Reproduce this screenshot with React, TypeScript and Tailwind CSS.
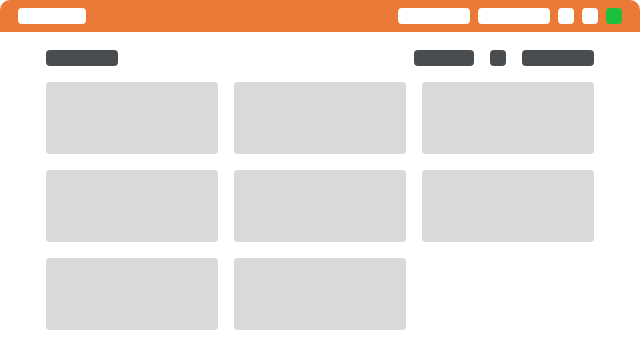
export default function App() {
  const cards = [0, 1, 2, 3, 4, 5, 6, 7];
  return (
    <div className="w-[640px] h-[360px] bg-white overflow-hidden">
      <div className="h-[32px] bg-[#ec7a37] rounded-t-[10px] flex items-center justify-between px-[18px]">
        <div className="w-[68px] h-[16px] bg-white rounded-[4px]" />
        <div className="flex items-center gap-[8px]">
          <div className="w-[72px] h-[16px] bg-white rounded-[4px]" />
          <div className="w-[72px] h-[16px] bg-white rounded-[4px]" />
          <div className="w-[16px] h-[16px] bg-white rounded-[4px]" />
          <div className="w-[16px] h-[16px] bg-white rounded-[4px]" />
          <div className="w-[16px] h-[16px] bg-[#1dbf3a] rounded-[4px]" />
        </div>
      </div>
      <div className="px-[46px] pt-[18px]">
        <div className="flex items-center justify-between h-[16px]">
          <div className="w-[72px] h-[16px] bg-[#4a4d50] rounded-[4px]" />
          <div className="flex items-center gap-[16px]">
            <div className="w-[60px] h-[16px] bg-[#4a4d50] rounded-[4px]" />
            <div className="w-[16px] h-[16px] bg-[#4a4d50] rounded-[4px]" />
            <div className="w-[72px] h-[16px] bg-[#4a4d50] rounded-[4px]" />
          </div>
        </div>
        <div className="grid grid-cols-[172px_172px_172px] gap-[16px] mt-[16px]">
          {cards.map((c) => (
            <div key={c} className="h-[72px] bg-[#d9d9d9] rounded-[4px]" />
          ))}
        </div>
      </div>
    </div>
  );
}
